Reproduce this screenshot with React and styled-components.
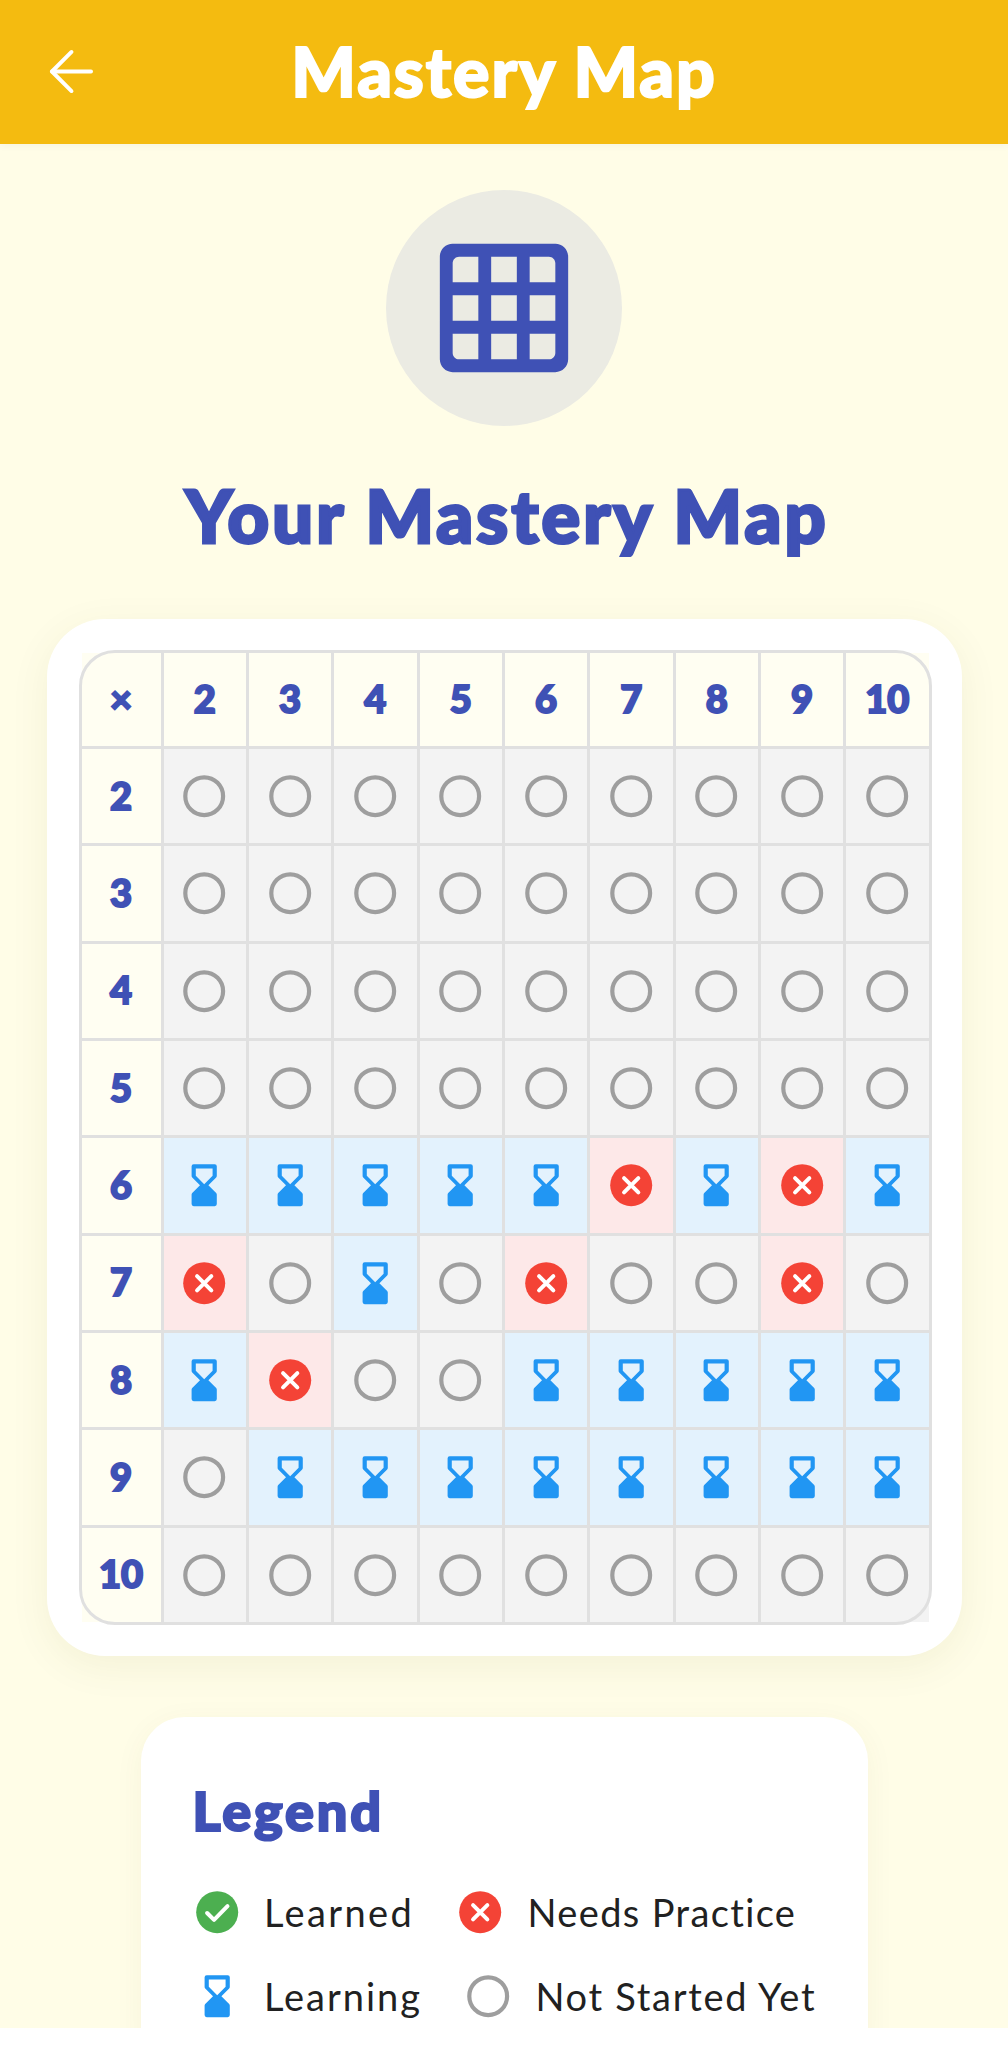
import React from 'react';
import styled, { createGlobalStyle } from 'styled-components';
import { ArrowLeft } from 'lucide-react';

const GlobalStyle = createGlobalStyle`
  html, body {
    margin: 0;
    padding: 0;
    background: #ffffff;
  }
`;

const BLUE = '#3f51b5';
const HEADING_FONT = '"Lato", "Noto Sans", sans-serif';

const Screen = styled.div`
  width: 1008px;
  height: 2048px;
  display: flex;
  flex-direction: column;
  overflow: hidden;
  font-family: ${HEADING_FONT};
`;

const Header = styled.header`
  flex: none;
  height: 143.5px;
  display: grid;
  grid-template-columns: 1fr auto 1fr;
  align-items: center;
  padding-left: 38px;
  padding-right: 38px;
  box-sizing: border-box;
  background: #f4bb10;
  box-shadow: 0 2px 8px rgba(0, 0, 0, 0.04);
  position: relative;
  z-index: 1;
`;

const BackButton = styled.button`
  justify-self: start;
  display: flex;
  padding: 0;
  border: 0;
  background: none;
  color: #ffffff;
`;

const HeaderTitle = styled.h1`
  margin: 0;
  font-size: 68px;
  line-height: 80px;
  font-weight: 900;
  color: #ffffff;
  -webkit-text-stroke: 2px #ffffff;
  letter-spacing: 1.9px;
  transform: translateY(-1px);
`;

const Body = styled.main`
  flex: 1;
  min-height: 0;
  overflow: hidden;
  background: #fffde7;
  display: flex;
  flex-direction: column;
  align-items: center;
  padding-top: 46.5px;
`;

const BottomInset = styled.div`
  flex: none;
  height: 20px;
  background: #ffffff;
`;

const Badge = styled.div`
  flex: none;
  width: 236px;
  height: 236px;
  border-radius: 50%;
  background: #ebebe3;
  display: flex;
  align-items: center;
  justify-content: center;
  color: ${BLUE};
`;

const PageTitle = styled.h2`
  flex: none;
  margin: 43px 0 0;
  padding-left: 6px;
  height: 150px;
  font-size: 72px;
  line-height: 92px;
  font-weight: 900;
  color: ${BLUE};
  -webkit-text-stroke: 3px ${BLUE};
  letter-spacing: 3.2px;
`;

const MapCard = styled.section`
  flex: none;
  width: 915px;
  box-sizing: border-box;
  padding: 31px 30px 31px 32px;
  background: #ffffff;
  border-radius: 58px;
  box-shadow: 0 10px 40px rgba(90, 80, 0, 0.07);
`;

const TableFrame = styled.div`
  position: relative;
  height: 975px;
  box-sizing: border-box;
  padding: 3px;

  &::after {
    content: '';
    position: absolute;
    inset: 0;
    border: 3px solid #e0e0e0;
    border-radius: 36px;
    pointer-events: none;
  }
`;

const Table = styled.div`
  height: 100%;
  display: grid;
  grid-template-columns: 79px repeat(9, 1fr);
  grid-template-rows: 93px repeat(9, 1fr);
  gap: 3px;
  background: #e0e0e0;
`;

const LabelCell = styled.div`
  display: flex;
  align-items: center;
  justify-content: center;
  box-sizing: border-box;
  padding-bottom: 3px;
  background: #fffef2;
  color: ${BLUE};
  font-size: 38px;
  font-weight: 900;
  -webkit-text-stroke: 2px ${BLUE};
`;

const toneColors = {
  idle: '#f3f3f3',
  learning: '#e3f2fd',
  practice: '#fde8e8',
};

const StatusCell = styled.div`
  display: flex;
  align-items: center;
  justify-content: center;
  background: ${(p) => toneColors[p.$tone]};
`;

const LegendCard = styled.section`
  flex: none;
  margin-top: 61px;
  width: 727px;
  box-sizing: border-box;
  padding: 58px 0 0 51px;
  height: 360px;
  background: #ffffff;
  border-radius: 44px;
  box-shadow: 0 6px 30px rgba(90, 80, 0, 0.05);
`;

const LegendTitle = styled.h3`
  margin: 0;
  padding-left: 1px;
  height: 95px;
  font-size: 54px;
  line-height: 72px;
  font-weight: 900;
  color: ${BLUE};
  -webkit-text-stroke: 2.2px ${BLUE};
  letter-spacing: 2.8px;
`;

const LegendRow = styled.div`
  display: flex;
  align-items: center;
  gap: 41px;
  height: 84px;
`;

const LegendItem = styled.div`
  display: flex;
  align-items: center;
  gap: 22px;
`;

const LegendLabel = styled.span`
  font-size: 38px;
  font-weight: 400;
  color: #212121;
  letter-spacing: ${(p) => p.$spacing}px;
  white-space: nowrap;
`;

const StatusIcon = ({ status }) => {
  if (status === 'learning') {
    return (
      <svg width="50.4" height="50.4" viewBox="0 0 24 24" fill="#2196f3">
        <path
          fillRule="evenodd"
          d="M7 2h10a1 1 0 0 1 1 1v4.6a1 1 0 0 1-.3.7L14 12l3.7 3.7a1 1 0 0 1 .3.7V21a1 1 0 0 1-1 1H7a1 1 0 0 1-1-1v-4.6a1 1 0 0 1 .3-.7L10 12 6.3 8.3a1 1 0 0 1-.3-.7V3a1 1 0 0 1 1-1zM8 4v3.5l4 4 4-4V4z"
        />
      </svg>
    );
  }
  if (status === 'practice') {
    return (
      <svg width="50.4" height="50.4" viewBox="0 0 24 24">
        <circle cx="12" cy="12" r="10" fill="#f44336" />
        <path d="M8.6 8.6l6.8 6.8M15.4 8.6l-6.8 6.8" stroke="#fff" strokeWidth="1.9" strokeLinecap="round" fill="none" />
      </svg>
    );
  }
  if (status === 'learned') {
    return (
      <svg width="50.4" height="50.4" viewBox="0 0 24 24">
        <circle cx="12" cy="12" r="10" fill="#4caf50" />
        <path d="M7.2 12.4l3.3 3.3 6.4-6.6" stroke="#fff" strokeWidth="1.9" strokeLinecap="round" strokeLinejoin="round" fill="none" />
      </svg>
    );
  }
  return (
    <svg width="50.4" height="50.4" viewBox="0 0 24 24">
      <circle cx="12" cy="12" r="9" fill="none" stroke="#9e9e9e" strokeWidth="2" />
    </svg>
  );
};

const GridIcon = () => (
  <svg width="154" height="154" viewBox="0 0 24 24" fill="currentColor">
    <path d="M20 2H4c-1.1 0-2 .9-2 2v16c0 1.1.9 2 2 2h16c1.1 0 2-.9 2-2V4c0-1.1-.9-2-2-2zM8 20H5c-.55 0-1-.45-1-1v-3h4v4zm0-6H4v-4h4v4zm0-6H4V5c0-.55.45-1 1-1h3v4zm6 12h-4v-4h4v4zm0-6h-4v-4h4v4zm0-6h-4V4h4v4zm5 12h-3v-4h4v3c0 .55-.45 1-1 1zm1-6h-4v-4h4v4zm0-6h-4V4h3c.55 0 1 .45 1 1v3z" />
  </svg>
);

const factors = [2, 3, 4, 5, 6, 7, 8, 9, 10];

const codes = { o: 'idle', h: 'learning', x: 'practice' };

const rows = {
  2: 'ooooooooo',
  3: 'ooooooooo',
  4: 'ooooooooo',
  5: 'ooooooooo',
  6: 'hhhhhxhxh',
  7: 'xohoxooxo',
  8: 'hxoohhhhh',
  9: 'ohhhhhhhh',
  10: 'ooooooooo',
};

const App = () => (
  <Screen>
    <GlobalStyle />
    <Header>
      <BackButton aria-label="Back">
        <ArrowLeft size={67} strokeWidth={1.4} />
      </BackButton>
      <HeaderTitle>Mastery Map</HeaderTitle>
    </Header>
    <Body>
      <Badge>
        <GridIcon />
      </Badge>
      <PageTitle>Your Mastery Map</PageTitle>
      <MapCard>
        <TableFrame>
          <Table>
            <LabelCell>×</LabelCell>
            {factors.map((n) => (
              <LabelCell key={n}>{n}</LabelCell>
            ))}
            {factors.map((row) => (
              <React.Fragment key={row}>
                <LabelCell>{row}</LabelCell>
                {rows[row].split('').map((code, i) => (
                  <StatusCell key={i} $tone={codes[code]}>
                    <StatusIcon status={codes[code]} />
                  </StatusCell>
                ))}
              </React.Fragment>
            ))}
          </Table>
        </TableFrame>
      </MapCard>
      <LegendCard>
        <LegendTitle>Legend</LegendTitle>
        <LegendRow>
          <LegendItem>
            <StatusIcon status="learned" />
            <LegendLabel $spacing={2.4}>Learned</LegendLabel>
          </LegendItem>
          <LegendItem>
            <StatusIcon status="practice" />
            <LegendLabel $spacing={1.36}>Needs Practice</LegendLabel>
          </LegendItem>
        </LegendRow>
        <LegendRow>
          <LegendItem>
            <StatusIcon status="learning" />
            <LegendLabel $spacing={2}>Learning</LegendLabel>
          </LegendItem>
          <LegendItem>
            <StatusIcon status="idle" />
            <LegendLabel $spacing={1.7}>Not Started Yet</LegendLabel>
          </LegendItem>
        </LegendRow>
      </LegendCard>
    </Body>
    <BottomInset />
  </Screen>
);

export default App;
